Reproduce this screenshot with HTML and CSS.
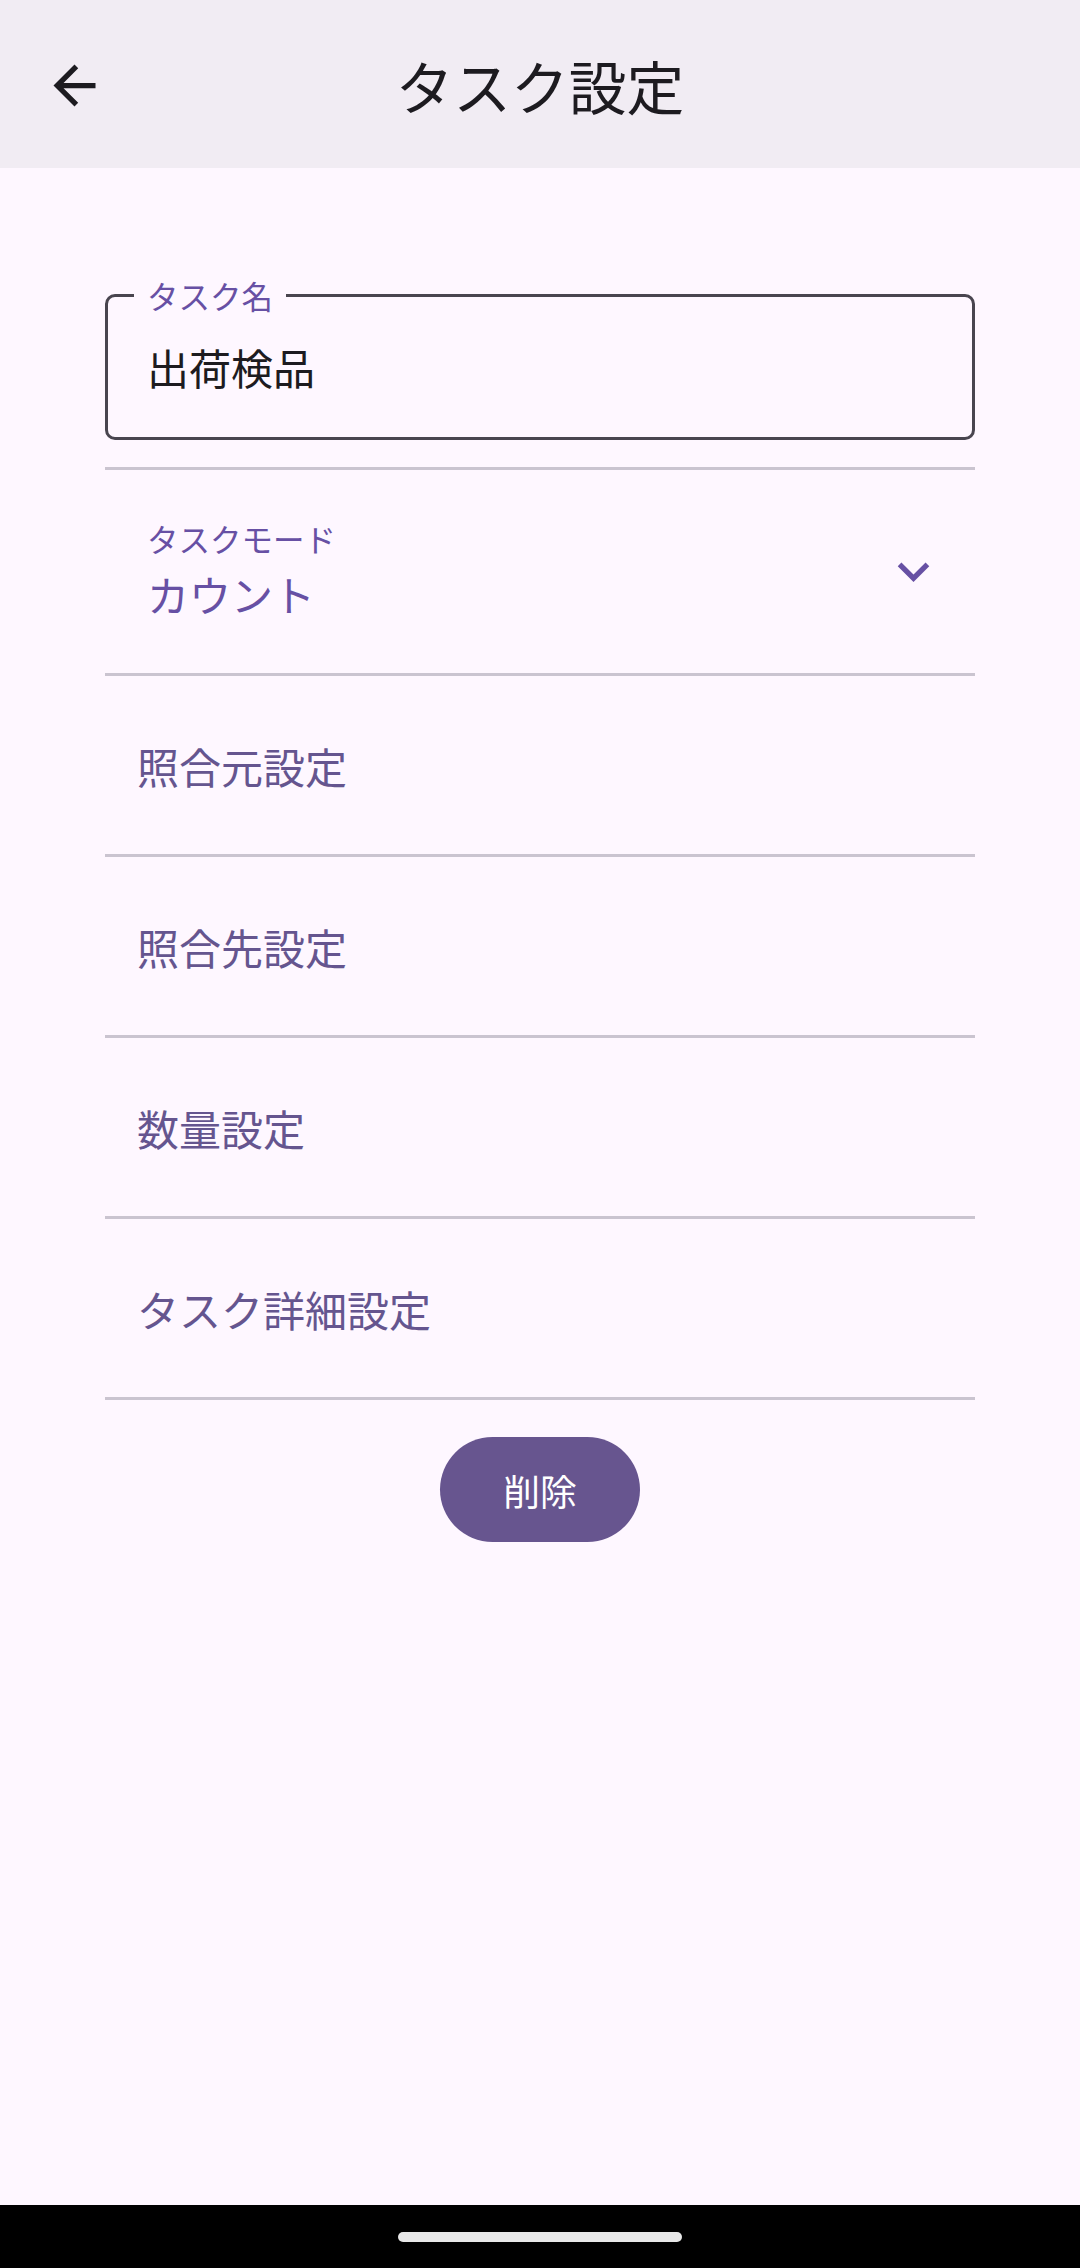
FILE: index.html
```html
<!DOCTYPE html>
<html lang="ja">
  <head>
    <meta charset="UTF-8" />
    <meta name="viewport" content="width=device-width, initial-scale=1.0" />
    <title>タスク設定</title>
    <link rel="stylesheet" href="styles.css">
  </head>
  <body>
    <header class="app-bar">
      <button class="nav-btn" aria-label="戻る">
        <svg viewBox="0 0 24 24" width="63" height="63">
          <path d="M20 11H7.83l5.59-5.59L12 4l-8 8 8 8 1.41-1.41L7.83 13H20v-2z" fill="#1d1b20" />
        </svg>
      </button>
      <h1 class="app-title">タスク設定</h1>
    </header>

    <main class="content">
      <!-- タスク名 -->
      <div class="text-field">
        <span class="field-label">タスク名</span>
        <span class="field-value">出荷検品</span>
      </div>

      <div class="settings-list">
        <div class="select-row">
          <div class="select-text">
            <span class="select-label">タスクモード</span>
            <span class="select-value">カウント</span>
          </div>
          <svg class="select-icon" viewBox="0 0 24 24" width="63" height="63">
            <path d="M16.59 8.59L12 13.17 7.41 8.59 6 10l6 6 6-6z" fill="#6750a4" />
          </svg>
        </div>
        <div class="list-row">照合元設定</div>
        <div class="list-row">照合先設定</div>
        <div class="list-row">数量設定</div>
        <div class="list-row">タスク詳細設定</div>
      </div>

      <div class="actions">
        <button class="delete-btn">削除</button>
      </div>
    </main>

    <div class="nav-bar">
      <span class="nav-handle"></span>
    </div>
  </body>
</html>
```

FILE: styles.css
```css
* {
  margin: 0;
  padding: 0;
  box-sizing: border-box;
}
body {
  min-height: 2268px;
  display: flex;
  flex-direction: column;
  background: #fef7ff;
  color: #1d1b20;
  font-family: "Noto Sans CJK JP", "Noto Sans", Roboto, sans-serif;
}
.app-bar {
  height: 168px;
  background: #f1ecf3;
  display: grid;
  grid-template-columns: 1fr auto 1fr;
  align-items: center;
}
.nav-btn {
  justify-self: start;
  margin-left: 43px;
  margin-top: 2px;
  width: 63px;
  height: 63px;
  border: none;
  background: none;
  display: flex;
}
.app-title {
  font-size: 57.75px;
  font-weight: 400;
  line-height: 72px;
  margin-top: 2px;
}
.content {
  flex: 1;
  padding: 126px 105px 0;
}
.text-field {
  position: relative;
  height: 146px;
  border: 3px solid #49454f;
  border-radius: 10px;
  display: flex;
  align-items: center;
  padding: 0 39px;
}
.field-label {
  position: absolute;
  top: -18px;
  left: 26px;
  padding: 0 13px;
  background: #fef7ff;
  color: #6750a4;
  font-size: 31.5px;
  line-height: 32px;
}
.field-value {
  font-size: 42px;
  line-height: 56px;
}
.settings-list {
  margin-top: 27px;
  border-top: 3px solid #cac4d0;
}
.select-row {
  height: 206px;
  border-bottom: 3px solid #cac4d0;
  display: flex;
  align-items: center;
  justify-content: space-between;
  padding: 0 30px 0 42px;
  color: #6750a4;
}
.select-text {
  display: flex;
  flex-direction: column;
  gap: 4px;
  padding-bottom: 6px;
}
.select-label {
  font-size: 31.5px;
  line-height: 46px;
}
.select-value {
  font-size: 42px;
  line-height: 58px;
}
.list-row {
  height: 181px;
  border-bottom: 3px solid #cac4d0;
  display: flex;
  align-items: center;
  padding-left: 32px;
  color: #65558f;
  font-size: 42px;
}
.actions {
  display: flex;
  justify-content: center;
  padding-top: 37px;
}
.delete-btn {
  height: 105px;
  padding: 0 63px;
  border: none;
  border-radius: 53px;
  background: #67558f;
  color: #fff;
  font-family: inherit;
  font-size: 36.75px;
}
.nav-bar {
  height: 63px;
  background: #000;
  display: flex;
  justify-content: center;
  padding-top: 27px;
}
.nav-handle {
  width: 284px;
  height: 10px;
  border-radius: 5px;
  background: #e8e8e8;
}
```
